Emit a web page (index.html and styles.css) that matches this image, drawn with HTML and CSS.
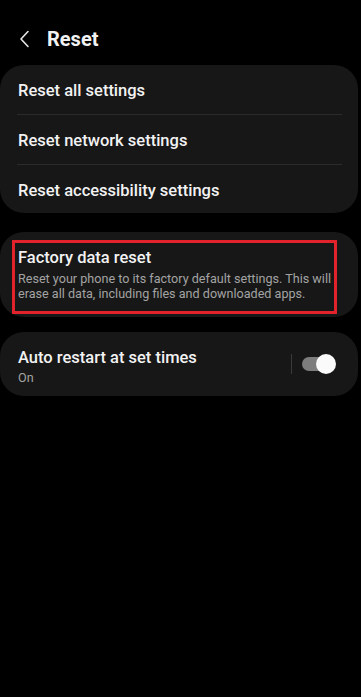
FILE: index.html
```html
<!DOCTYPE html>
<html lang="en">

<head>
    <meta charset="UTF-8">
    <meta name="viewport" content="width=device-width, initial-scale=1.0">
    <title>Reset</title>

    <!-- styles -->
    <link rel="stylesheet" href="styles.css">
</head>

<body>
    <!-- header -->
    <div class="header">
        <svg class="back" width="12" height="18" viewBox="0 0 12 18">
            <path d="M9 1.5 L2 9 L9 16.5" fill="none" stroke="#e6e6e6" stroke-width="1.6" stroke-linecap="round" stroke-linejoin="round"/>
        </svg>
        <div class="title">Reset</div>
    </div>

    <!-- reset options -->
    <div class="card">
        <div class="row">Reset all settings</div>
        <div class="row">Reset network settings</div>
        <div class="row">Reset accessibility settings</div>
    </div>

    <!-- factory reset -->
    <div class="card card-factory">
        <div class="highlight">
            <div class="item-title">Factory data reset</div>
            <div class="item-desc">Reset your phone to its factory default settings. This will erase all data, including files and downloaded apps.</div>
        </div>
    </div>

    <!-- auto restart -->
    <div class="card card-switch">
        <div class="switch-text">
            <div class="item-title">Auto restart at set times</div>
            <div class="item-sub">On</div>
        </div>
        <div class="divider"></div>
        <div class="toggle">
            <div class="thumb"></div>
        </div>
    </div>
</body>

</html>
```

FILE: styles.css
```css
/* reset */
* {
    margin: 0;
    padding: 0;
    box-sizing: border-box;
}

body {
    background-color: #000;
    font-family: Roboto, "Noto Sans", sans-serif;
    color: #f2f2f2;
    width: 361px;
}

/* header */
.header {
    display: flex;
    align-items: center;
    height: 65px;
    padding: 12px 0 0 19px;
}

.back {
    margin-right: 16px;
}

.title {
    font-size: 20px;
    font-weight: 700;
}

/* cards */
.card {
    background-color: #171717;
    border-radius: 24px;
    margin-right: 3px;
}

.row {
    display: flex;
    align-items: center;
    height: 50px;
    margin: 0 16px 0 17px;
    padding: 2px 0 0 1px;
    font-size: 16.5px;
    font-weight: 500;
    border-bottom: 1px solid #2b2b2b;
}

.row:last-child {
    border-bottom: none;
    height: 48px;
}

/* factory data reset */
.card-factory {
    margin-top: 19px;
    padding: 8px 21px 3px 12px;
}

.highlight {
    border: 3px solid #e3232b;
    padding: 5px 0 10px 3px;
}

.item-title {
    font-size: 16.5px;
    font-weight: 500;
    line-height: 20px;
}

.item-desc {
    font-size: 12.6px;
    color: #a3a3a3;
    line-height: 15px;
    margin-top: 3px;
}

/* auto restart */
.card-switch {
    margin-top: 15px;
    display: flex;
    align-items: center;
    padding: 16px 28px 11px 18px;
}

.switch-text {
    flex: 1;
}

.item-sub {
    font-size: 12.6px;
    color: #a3a3a3;
    margin-top: 2px;
}

.divider {
    width: 1px;
    height: 20px;
    background-color: #3a3a3a;
    margin: 0 10px 5px 0;
}

.toggle {
    position: relative;
    width: 28px;
    height: 14px;
    border-radius: 7px;
    background-color: #7d7d7d;
    margin-bottom: 5px;
}

.thumb {
    position: absolute;
    right: -6px;
    top: -3px;
    width: 20px;
    height: 20px;
    border-radius: 50%;
    background-color: #fafafa;
}
```
